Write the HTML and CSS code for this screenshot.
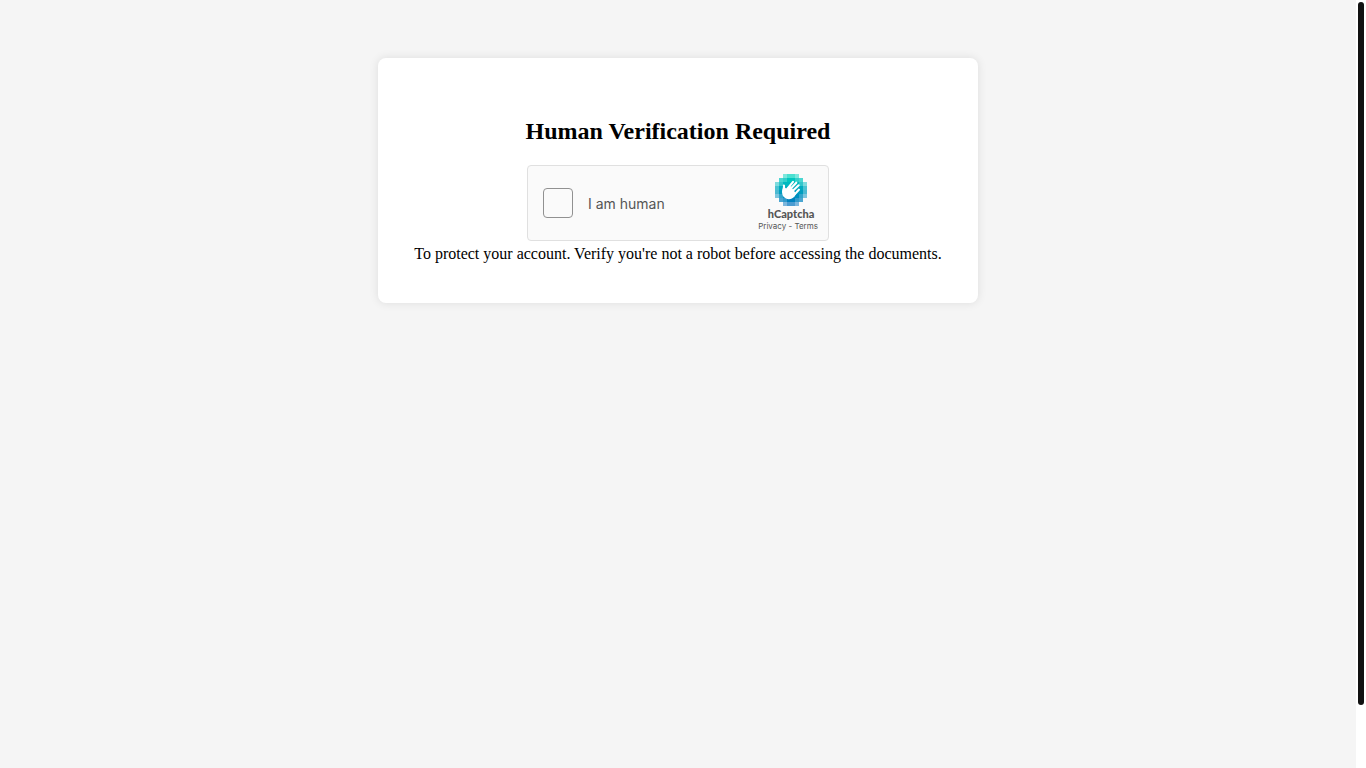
FILE: index.html
```html
<!DOCTYPE html>
<html lang="en">
<head>
<meta charset="utf-8">
<title>Human Verification Required</title>
<link rel="stylesheet" href="styles.css">
</head>
<body>
<main class="page">
  <section class="card">
    <h2 class="card-title">Human Verification Required</h2>
    <div class="captcha">
      <input class="captcha-check" type="checkbox" id="human">
      <label class="captcha-label" for="human">I am human</label>
      <div class="brand">
        <svg class="brand-logo" viewBox="0 0 32 32" aria-hidden="true">
          <g shape-rendering="crispEdges">
            <g fill="#00d4bf"><path opacity=".5" d="M8 0h4v4H8zM20 0h4v4h-4z"/><path opacity=".7" d="M12 0h8v4h-8z"/></g>
            <g fill="#00c6bf"><path opacity=".7" d="M4 4h4v4H4zM24 4h4v4h-4z"/><path opacity=".8" d="M8 4h4v4H8zM20 4h4v4h-4z"/><path d="M12 4h8v4h-8z"/></g>
            <g fill="#00b9bf"><path opacity=".5" d="M0 8h4v4H0zM28 8h4v4h-4z"/><path opacity=".8" d="M4 8h4v4H4zM24 8h4v4h-4z"/><path d="M8 8h16v4H8z"/></g>
            <g fill="#00abbf"><path opacity=".7" d="M0 12h4v4H0zM28 12h4v4h-4z"/><path d="M4 12h24v4H4z"/></g>
            <g fill="#009dbf"><path opacity=".7" d="M0 16h4v4H0zM28 16h4v4h-4z"/><path d="M4 16h24v4H4z"/></g>
            <g fill="#008fbf"><path opacity=".5" d="M0 20h4v4H0zM28 20h4v4h-4z"/><path opacity=".8" d="M4 20h4v4H4zM24 20h4v4h-4z"/><path d="M8 20h16v4H8z"/></g>
            <g fill="#0082bf"><path opacity=".7" d="M4 24h4v4H4zM24 24h4v4h-4z"/><path opacity=".8" d="M8 24h4v4H8zM20 24h4v4h-4z"/><path d="M12 24h8v4h-8z"/></g>
            <g fill="#0074bf"><path opacity=".5" d="M8 28h4v4H8zM20 28h4v4h-4z"/><path opacity=".7" d="M12 28h8v4h-8z"/></g>
          </g>
          <path fill="#fff" d="M7.500 16.500 8.500 12l3 3L15 11.500l6 8-1.500 3c-2 2.300-5.500 3.500-8.500 2-3.200-1.500-4.500-4.700-3.500-8z"/>
          <g fill="none" stroke="#fff" stroke-width="2.100" stroke-linecap="round">
            <path d="M8.900 11.500C9.600 13 8.300 14.500 8.100 18"/>
            <path d="M11.800 15.500 18 7.900"/>
            <path d="M13.500 17 21.300 8.700"/>
            <path d="M15.500 19 23.700 11.300"/>
            <path d="M17.500 22.500C20 20.500 21 18.500 23.900 15.700"/>
          </g>
        </svg>
        <span class="brand-name">hCaptcha</span>
        <span class="brand-links"><a href="#privacy">Privacy</a> - <a href="#terms">Terms</a></span>
      </div>
    </div>
    <p class="card-text">To protect your account. Verify you're not a robot before accessing the documents.</p>
  </section>
</main>
<div class="scroll-track"><div class="scroll-thumb"></div></div>
</body>
</html>
```
FILE: styles.css
```css
* { box-sizing: border-box; }
body {
  margin: 0;
  min-height: 100vh;
  display: flex;
  background: #f5f5f5;
  color: #000;
  font: 16px/18px "Liberation Serif", serif;
}
.page {
  flex: 1;
  display: flex;
  justify-content: center;
  align-items: flex-start;
  padding: 58px 8px;
}
.card {
  display: flex;
  flex-direction: column;
  align-items: center;
  padding: 60px 36px 40px;
  background: #fff;
  border-radius: 8px;
  box-shadow: 0 0 10px rgba(0, 0, 0, .1);
  text-align: center;
}
.card-title {
  margin: 0 0 20px;
  font-size: 24px;
  line-height: 27px;
}
.card-text { margin: 4px 0 0; }
.captcha {
  width: 302px;
  max-width: 100%;
  height: 76px;
  display: flex;
  align-items: center;
  padding: 0 10px 0 15px;
  background: #fafafa;
  border: 1px solid #e0e0e0;
  border-radius: 4px;
  color: #555;
  font-family: Inter, sans-serif;
}
.captcha-check {
  appearance: none;
  width: 30px;
  height: 30px;
  margin: 0 15px 0 0;
  background: #fafafa;
  border: 1px solid #919191;
  border-radius: 4px;
}
.captcha-label { padding-top: 2px; font-size: 14px; }
.brand {
  margin-left: auto;
  display: flex;
  flex-direction: column;
  align-items: center;
}
.brand-logo { width: 32px; height: 32px; margin-left: 6px; }
.brand-name {
  margin: 2px 0 0 6px;
  font: 900 11px/12px Lato, sans-serif;
}
.brand-links {
  font-size: 8px;
  line-height: 12px;
}
.brand-links a { color: inherit; text-decoration: none; }
.scroll-track {
  width: 10px;
  padding: 2px;
  background: #fff;
}
.scroll-thumb {
  height: 92%;
  border-radius: 3px;
  background: #111;
}
```
